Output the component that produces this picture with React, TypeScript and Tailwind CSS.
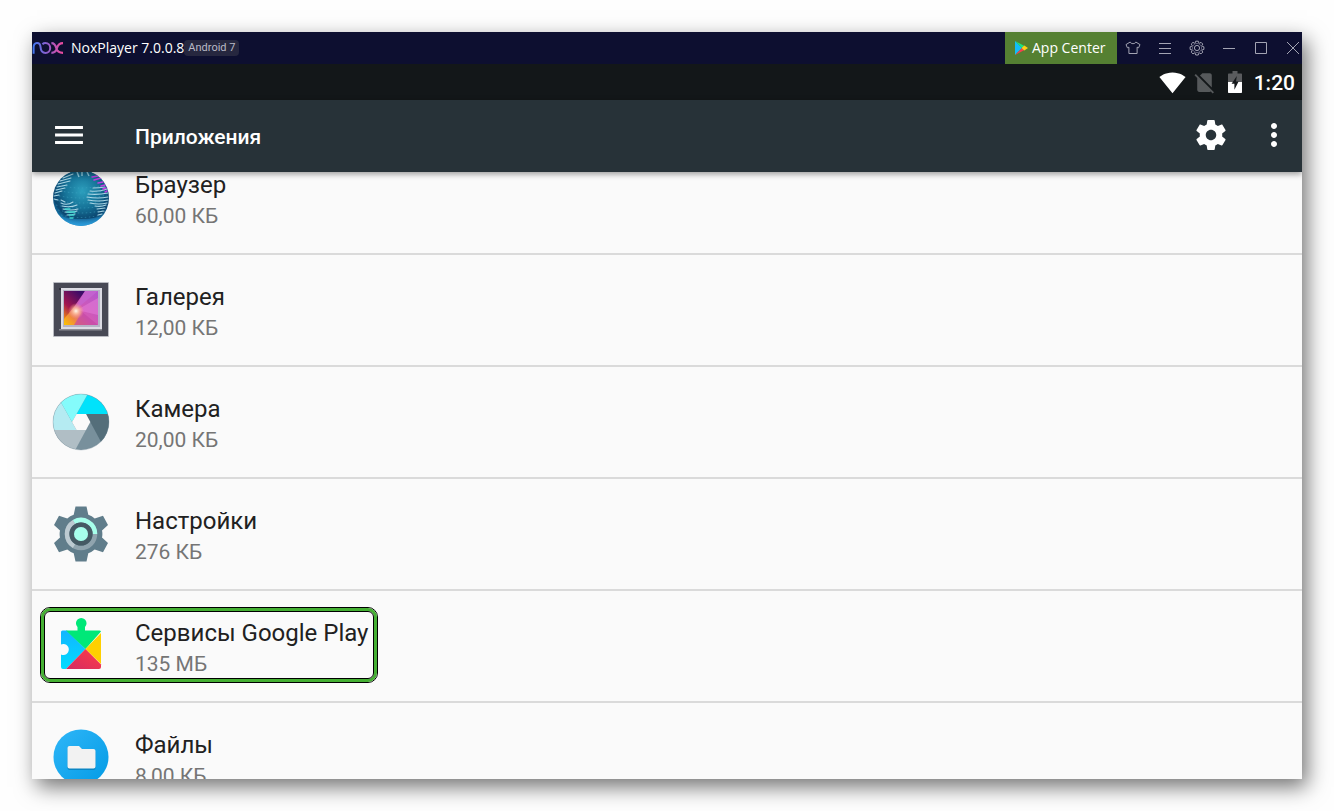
import React from "react";

const NoxLogo = () => (
  <svg width="32" height="14" viewBox="0 0 32 14" fill="none" aria-hidden="true">
    <defs>
      <linearGradient id="nox" x1="0" y1="0" x2="32" y2="0" gradientUnits="userSpaceOnUse">
        <stop offset="0" stopColor="#3a78f2" />
        <stop offset="0.45" stopColor="#8a5fce" />
        <stop offset="1" stopColor="#f4489a" />
      </linearGradient>
    </defs>
    <path
      d="M1.6 12.8V6.8C1.600 .6 8.200 .6 8.600 6.400C8.800 9.800 10.600 11.900 13.400 11.900C16.200 11.900 18.200 9.700 18.200 7S16.200 2.100 13.400 2.100C12.200 2.100 11.200 2.500 10.400 3.300"
      stroke="url(#nox)"
      strokeWidth="2"
    />
    <path
      d="M19.400 2.100C22.600 2.100 23.400 3.800 24.200 7C25 10.200 26.800 11.900 31 11.900M31 2.100C27.600 2.100 25.800 3.800 25 7C24.200 10.200 22.800 11.900 19.400 11.900"
      stroke="url(#nox)"
      strokeWidth="2.100"
    />
  </svg>
);

const PlayIcon = () => (
  <svg width="14" height="16" viewBox="0 0 14 16" aria-hidden="true">
    <path d="M1 1v14l7-7z" fill="#12bdf8" />
    <path d="M1 1l9.500 5L8 8z" fill="#1de27f" />
    <path d="M1 15l9.500-5L8 8z" fill="#f5404f" />
    <path d="M10.300 5.600L14 8l-3.700 2.400L7.600 8z" fill="#ffcf14" />
  </svg>
);

const ShirtIcon = () => (
  <svg width="16" height="16" viewBox="0 0 16 16" fill="none" stroke="currentColor" aria-hidden="true">
    <path d="M5.200 2L1 4.600l1.400 3.200 1.500-.6v6.300h8.200V7.200l1.500.6L15 4.600 10.800 2C10.300 4.200 5.700 4.200 5.200 2z" strokeLinejoin="round" />
  </svg>
);

const CogIcon = () => (
  <svg width="16" height="16" viewBox="0 0 16 16" fill="none" stroke="currentColor" aria-hidden="true">
    <circle cx="8" cy="8" r="2.600" />
    <path
      d="M6.700 1.200h2.600l.3 1.500 1.100.5 1.300-.9 1.800 1.800-.9 1.300.5 1.100 1.500.3v2.600l-1.500.3-.5 1.100.9 1.300-1.800 1.800-1.300-.9-1.100.5-.3 1.500H6.700l-.3-1.500-1.100-.5-1.300.9-1.800-1.800.9-1.300-.5-1.100-1.500-.3V6.800l1.500-.3.5-1.100-.9-1.300L4 2.300l1.300.9 1.100-.5z"
      strokeLinejoin="round"
    />
    <circle cx="8" cy="8" r="4.600" strokeOpacity="0.5" />
  </svg>
);

const WifiIcon = () => (
  <svg width="27" height="27" viewBox="0 0 24 24" fill="#fff" aria-hidden="true">
    <path d="M12.010 21.490L23.640 7c-.45-.34-4.930-4-11.640-4C5.280 3 .81 6.660.36 7l11.630 14.490.01.01.01-.01z" />
  </svg>
);

const NoSimIcon = () => (
  <svg width="25" height="25" viewBox="0 0 24 24" fill="#56595b" aria-hidden="true">
    <path d="M18.990 5c0-1.100-.89-2-1.990-2h-7L7.660 5.340 19 16.680 18.990 5zM3.650 3.880L2.380 5.150 5 7.770V19c0 1.100.9 2 2 2h10.010c.35 0 .67-.1.96-.26l1.880 1.880 1.270-1.270L3.650 3.880z" />
  </svg>
);

const BatteryIcon = () => (
  <svg width="14" height="22" viewBox="0 0 14 22" aria-hidden="true">
    <path d="M4.500 0h5v2.500H13c.6 0 1 .4 1 1V11H0V3.500c0-.6.4-1 1-1h3.500z" fill="#5a5c5e" />
    <path d="M0 11h14v10c0 .6-.4 1-1 1H1c-.6 0-1-.4-1-1z" fill="#fff" />
    <path d="M8.800 5L3.600 12.800h2.800v6L10.600 10.600H8z" fill="#131719" />
  </svg>
);

const BrowserIcon = () => (
  <svg width="58" height="58" viewBox="0 0 58 58" fill="none" aria-hidden="true">
    <defs>
      <radialGradient id="globe" cx="0.52" cy="0.38" r="0.6">
        <stop offset="0" stopColor="#2c9fbd" />
        <stop offset="0.5" stopColor="#167398" />
        <stop offset="0.85" stopColor="#0b4670" />
        <stop offset="1" stopColor="#1779ad" />
      </radialGradient>
      <linearGradient id="globeGlow" x1="0" y1="0" x2="0" y2="1">
        <stop offset="0" stopColor="#2e9fe0" stopOpacity="0" />
        <stop offset="1" stopColor="#2e9fe0" />
      </linearGradient>
      <clipPath id="globeClip">
        <circle cx="29" cy="29" r="28" />
      </clipPath>
    </defs>
    <circle cx="29" cy="29" r="28" fill="url(#globe)" />
    <g clipPath="url(#globeClip)">
      <g stroke="#49aecb" strokeWidth="0.800" strokeDasharray="1.500 2.500" opacity="0.6">
        <path d="M6 16q23 6 46 0M4 21q25 6 50 0M3 26q26 6 52 0M3 31q26 6 52 0M4 36q25 6 50 0M6 41q23 6 46 0M9 46q20 5 40 0" />
      </g>
      <path d="M0 44Q29 56 58 44V58H0z" fill="url(#globeGlow)" />
      <g stroke="#a9d5e4" strokeWidth="1.100" strokeLinecap="round">
        <path d="M11 9l10-4M8 12l11-3M6 15l12-3M5 18l10-2M4 21l9-2M3 24l7-2M2 27l5-1M2 30l4 1" />
        <path d="M9 31l4 2M9 34q6 3 12-1M10 37q8 2 15-1M11 40q8 2 15 0M13 43q7 1 12-1M15 46q5 0 8-1" />
        <path d="M41 19q6 0 12-1M38 22q9 1 17-2M36 25q10 1 20-1M35 28q11 2 21 0M36 31q10 2 20 0M38 34q9 2 17 0M43 37q6 1 11-1M45 40l8-1M46 43l6-1M46 46l4-1" />
      </g>
      <g stroke="#3fd5d0" strokeWidth="1.300" strokeLinecap="round">
        <path d="M15 43l8 0M17 46l5 0M18 49l3 0M13 40l5 0" />
      </g>
      <g stroke="#c13ee0" strokeWidth="1.500" strokeLinecap="round">
        <path d="M40 8l6-1M42 11l7-2M46 14l5-1M49 17l4-1M51 20l3-1M53 23l2-1" />
      </g>
      <path d="M25 3l2 5M30 3v4M35 3l2 4" stroke="#8cc9dd" strokeWidth="1.500" />
    </g>
  </svg>
);

const GalleryIcon = () => (
  <svg width="58" height="58" viewBox="0 0 58 58" aria-hidden="true">
    <defs>
      <linearGradient id="photo" x1="0" y1="1" x2="1" y2="0">
        <stop offset="0" stopColor="#fbc400" />
        <stop offset="0.22" stopColor="#f08a3c" />
        <stop offset="0.45" stopColor="#d45ab4" />
        <stop offset="1" stopColor="#b456cf" />
      </linearGradient>
      <linearGradient id="photoDark" x1="0" y1="1" x2="0.7" y2="0">
        <stop offset="0" stopColor="#f08a10" />
        <stop offset="0.4" stopColor="#a31650" />
        <stop offset="1" stopColor="#3b0c68" />
      </linearGradient>
      <radialGradient id="flare">
        <stop offset="0" stopColor="#fff8ea" />
        <stop offset="0.4" stopColor="#ffc39a" stopOpacity="0.8" />
        <stop offset="1" stopColor="#ff9a7a" stopOpacity="0" />
      </radialGradient>
    </defs>
    <rect x="1" y="1" width="56" height="55" rx="1" fill="#b9bac1" />
    <rect x="2" y="2" width="54" height="53" fill="#484955" />
    <path d="M7 7h43v2H7z" fill="#30313c" />
    <path d="M7 48h43v1.500H7z" fill="#8a8b93" />
    <rect x="9" y="7" width="41" height="41" fill="#dcdce4" />
    <rect x="11" y="9" width="37" height="37" fill="#b5b3c6" />
    <rect x="12" y="10" width="34" height="34" fill="url(#photo)" />
    <path d="M12 10h21L22 26 12 38z" fill="url(#photoDark)" />
    <path d="M33 10h13L22 30z" fill="#c666d2" opacity="0.7" />
    <path d="M46 17v17L25 29z" fill="#e27ad6" opacity="0.6" />
    <path d="M46 44H22l8-13z" fill="#c448a6" opacity="0.7" />
    <circle cx="24" cy="30" r="8" fill="url(#flare)" />
  </svg>
);

const CameraIcon = () => (
  <svg width="58" height="58" viewBox="0 0 58 58" aria-hidden="true">
    <defs>
      <clipPath id="lens">
        <circle cx="29" cy="29" r="28" />
      </clipPath>
    </defs>
    <g clipPath="url(#lens)">
      <path d="M0 0h58v58H0z" fill="#78909c" />
      <path d="M24.500 21L36.300 0H58v21z" fill="#00e2fb" />
      <path d="M34 21h24v39h-3z" fill="#546e7a" />
      <path d="M34 37L21.600 60H0V37z" fill="#b0bec5" />
      <path d="M24.500 37H0V0h3.700z" fill="#b5ebf2" />
      <path d="M20 29L3.700 0h32.600z" fill="#84fbfb" />
    </g>
    <path d="M24.500 21H34l4.300 8-4.300 8h-9.500L20 29z" fill="#fafafa" />
    <circle cx="29" cy="29" r="28" fill="none" stroke="#78909c" strokeOpacity="0.3" />
  </svg>
);

const SettingsIcon = () => (
  <svg width="58" height="58" viewBox="0 0 58 58" fill="none" aria-hidden="true">
    <path
      d="M23.500 1.500h11l1.800 8.300q3.700 1.300 6.400 3.700l8.300-2.700 5 9.200-6 5.500q.8 3.500 0 7l6 5.500-5 9.200-8.300-2.700q-2.700 2.400-6.400 3.700l-1.800 8.300h-11l-1.800-8.300q-3.700-1.300-6.400-3.700L7 47.200 2 38l6-5.500q-.8-3.500 0-7L2 20l5-9.200 8.300 2.700q2.700-2.400 6.400-3.700z"
      fill="#607d8b"
    />
    <circle cx="29" cy="29" r="14" stroke="#90a4ae" strokeWidth="4.500" />
    <path d="M22 41.100A14 14 0 0 1 22 16.900" stroke="#bccad1" strokeWidth="4.500" />
    <path d="M22 16.900A14 14 0 0 1 43 29" stroke="#a7ffeb" strokeWidth="4.500" />
    <circle cx="29" cy="29" r="9.300" stroke="#455a64" strokeWidth="4.500" />
    <circle cx="29" cy="29" r="7" fill="#a7ffeb" />
  </svg>
);

const PlayServicesIcon = () => (
  <svg width="58" height="58" viewBox="0 0 58 58" aria-hidden="true">
    <defs>
      <linearGradient id="svcBlue" x1="0" y1="0" x2="0" y2="1">
        <stop offset="0" stopColor="#12b5ff" />
        <stop offset="1" stopColor="#00dcff" />
      </linearGradient>
      <linearGradient id="svcRed" x1="1" y1="0" x2="0" y2="1">
        <stop offset="0" stopColor="#ff3c45" />
        <stop offset="1" stopColor="#d42c63" />
      </linearGradient>
    </defs>
    <path d="M15 13.500L33.500 32 14 52h-3a2 2 0 0 1-2-2V37.500a5.500 5.500 0 1 0 0-10V15q0-1.500 1.500-1.500z" fill="url(#svcBlue)" />
    <path d="M14 13.500h11.500V10a5.300 5.300 0 1 1 7.500 0v3.500h14.500q1 0 1.500 1L33.500 32z" fill="#00e878" />
    <path d="M49 16v31L33.500 32z" fill="#ffd000" />
    <path d="M33.500 32L49 47.500V50a2 2 0 0 1-2 2H14z" fill="url(#svcRed)" />
  </svg>
);

const FilesIcon = () => (
  <svg width="58" height="58" viewBox="0 0 58 58" aria-hidden="true">
    <defs>
      <linearGradient id="filesBg" x1="0" y1="0" x2="1" y2="1">
        <stop offset="0" stopColor="#2fb6f8" />
        <stop offset="1" stopColor="#039be5" />
      </linearGradient>
    </defs>
    <circle cx="29" cy="28" r="27.500" fill="url(#filesBg)" />
    <path d="M17.500 18H27l3 3h11.500a2 2 0 0 1 2 2v16a2 2 0 0 1-2 2h-24a2 2 0 0 1-2-2V20a2 2 0 0 1 2-2z" fill="#0b86c4" />
    <path d="M17.500 17H27l3 3h11.500a2 2 0 0 1 2 2v15.500a2 2 0 0 1-2 2h-24a2 2 0 0 1-2-2V19a2 2 0 0 1 2-2z" fill="#f2f2f2" />
  </svg>
);

type AppEntry = {
  name: string;
  size: string;
  icon: React.ReactNode;
  highlighted?: boolean;
};

const apps: AppEntry[] = [
  { name: "Браузер", size: "60,00 КБ", icon: <BrowserIcon /> },
  { name: "Галерея", size: "12,00 КБ", icon: <GalleryIcon /> },
  { name: "Камера", size: "20,00 КБ", icon: <CameraIcon /> },
  { name: "Настройки", size: "276 КБ", icon: <SettingsIcon /> },
  {
    name: "Сервисы Google Play",
    size: "135 МБ",
    icon: <PlayServicesIcon />,
    highlighted: true,
  },
  { name: "Файлы", size: "8,00 КБ", icon: <FilesIcon /> },
];

const TitleBar = () => (
  <div className="flex h-8 shrink-0 items-center bg-[#0d0f30] font-['Open_Sans','Noto_Sans',sans-serif] text-sm text-white">
    <NoxLogo />
    <span className="ml-[7px]">NoxPlayer 7.0.0.8</span>
    <span className="rounded-sm bg-[#26273f] px-1 font-[Roboto,sans-serif] text-[11px] leading-4 text-[#b9bac6]">
      Android 7
    </span>
    <div className="ml-auto flex h-full items-center text-[#a3a4b3]">
      <button className="flex h-full w-28 items-center gap-1 bg-[#558032] pl-[9px] whitespace-nowrap text-white">
        <PlayIcon />
        App Center
      </button>
      <button aria-label="Theme" className="flex h-full w-8 items-center justify-center">
        <ShirtIcon />
      </button>
      <button aria-label="Menu" className="flex h-full w-8 items-center justify-center">
        <svg width="12" height="12" viewBox="0 0 12 12" stroke="currentColor" aria-hidden="true">
          <path d="M0 1.500h12M0 6.500h12M0 11.500h12" />
        </svg>
      </button>
      <button aria-label="System settings" className="flex h-full w-8 items-center justify-center">
        <CogIcon />
      </button>
      <button aria-label="Minimize" className="flex h-full w-8 items-center justify-center">
        <svg width="12" height="12" viewBox="0 0 12 12" stroke="currentColor" aria-hidden="true">
          <path d="M0 6.500h12" />
        </svg>
      </button>
      <button aria-label="Maximize" className="flex h-full w-8 items-center justify-center">
        <svg width="12" height="12" viewBox="0 0 12 12" fill="none" stroke="currentColor" aria-hidden="true">
          <path d="M.5 .5h11v11H.5z" />
        </svg>
      </button>
      <button aria-label="Close" className="flex h-full items-center pr-[3px] pl-[10px]">
        <svg width="12" height="12" viewBox="0 0 12 12" stroke="currentColor" aria-hidden="true">
          <path d="M0 0l12 12M12 0L0 12" />
        </svg>
      </button>
    </div>
  </div>
);

const StatusBar = () => (
  <div className="flex h-9 shrink-0 items-center justify-end bg-[#131719] pr-[7px]">
    <WifiIcon />
    <span className="ml-[6px]">
      <NoSimIcon />
    </span>
    <span className="ml-[11px]">
      <BatteryIcon />
    </span>
    <span className="ml-3 pt-[2px] text-[21px] leading-6 font-medium text-white">1:20</span>
  </div>
);

const AppBar = () => (
  <header className="relative z-10 flex h-[72px] shrink-0 items-center bg-[#273238] pr-[10px] pl-[19px] text-white shadow-[0_2px_6px_rgba(0,0,0,0.4)]">
    <button aria-label="Открыть меню" className="pb-[2px]">
      <svg width="36" height="36" viewBox="0 0 24 24" fill="#fff" aria-hidden="true">
        <path d="M2.700 18h18.600v-2H2.700v2zm0-5h18.600v-2H2.700v2zm0-7v2h18.600V6H2.700z" />
      </svg>
    </button>
    <h1 className="ml-12 pt-[3px] text-[21px] font-medium">Приложения</h1>
    <button aria-label="Настройки приложений" className="ml-auto pb-[2px]">
      <svg width="36" height="36" viewBox="0 0 24 24" fill="#fff" aria-hidden="true">
        <path d="M19.430 12.980c.04-.32.07-.64.07-.98s-.03-.66-.07-.98l2.110-1.650c.19-.15.24-.42.12-.64l-2-3.460c-.12-.22-.39-.3-.61-.22l-2.490 1c-.52-.4-1.080-.73-1.690-.98l-.38-2.650C14.460 2.180 14.250 2 14 2h-4c-.25 0-.46.18-.49.42l-.38 2.650c-.61.25-1.170.59-1.690.98l-2.490-1c-.23-.09-.49 0-.61.22l-2 3.460c-.13.22-.07.49.12.64l2.110 1.650c-.04.32-.07.65-.07.98s.03.66.07.98l-2.110 1.650c-.19.15-.24.42-.12.64l2 3.460c.12.22.39.3.61.22l2.490-1c.52.4 1.080.73 1.690.98l.38 2.650c.03.24.24.42.49.42h4c.25 0 .46-.18.49-.42l.38-2.650c.61-.25 1.170-.59 1.690-.98l2.490 1c.23.09.49 0 .61-.22l2-3.460c.12-.22.07-.49-.12-.64l-2.110-1.650zM12 15.500c-1.930 0-3.500-1.570-3.500-3.500s1.570-3.500 3.500-3.500 3.500 1.570 3.500 3.500-1.570 3.500-3.500 3.500z" />
      </svg>
    </button>
    <button aria-label="Ещё" className="ml-[27px] pb-[2px]">
      <svg width="36" height="36" viewBox="0 0 24 24" fill="#fff" aria-hidden="true">
        <path d="M12 8c1.100 0 2-.9 2-2s-.9-2-2-2-2 .9-2 2 .9 2 2 2zm0 2c-1.100 0-2 .9-2 2s.9 2 2 2 2-.9 2-2-.9-2-2-2zm0 6c-1.100 0-2 .9-2 2s.9 2 2 2 2-.9 2-2-.9-2-2-2z" />
      </svg>
    </button>
  </header>
);

const AppRow: React.FC<{ app: AppEntry }> = ({ app }) => (
  <li className="flex h-28 shrink-0 items-center border-b-2 border-[#dadada] pl-5">
    <div className="relative flex h-[76px] items-center gap-[25px]">
      {app.icon}
      <div className="pt-1">
        <p className="text-2xl leading-8 text-[#212121]">{app.name}</p>
        <p className="text-[21px] leading-[30px] text-[#757575]">{app.size}</p>
      </div>
      {app.highlighted && (
        <div className="pointer-events-none absolute -top-px -right-[10px] bottom-px -left-3 rounded-[10px] border border-black">
          <div className="h-full rounded-[9px] border-3 border-[#45b033]">
            <div className="h-full rounded-md border border-black" />
          </div>
        </div>
      )}
    </div>
  </li>
);

export default function App() {
  return (
    <div className="h-screen bg-[#fefefe] p-8 font-[Roboto,sans-serif]">
      <main className="flex h-full flex-col overflow-hidden bg-[#fafafa] shadow-[5px_8px_20px_rgba(0,0,0,0.55)]">
        <TitleBar />
        <StatusBar />
        <AppBar />
        {/* list is scrolled a little, so the first row sits under the app bar */}
        <div className="min-h-0 flex-1 overflow-hidden">
          <ul className="-mt-[29px] flex flex-col">
            {apps.map((app) => (
              <AppRow key={app.name} app={app} />
            ))}
          </ul>
        </div>
      </main>
    </div>
  );
}
